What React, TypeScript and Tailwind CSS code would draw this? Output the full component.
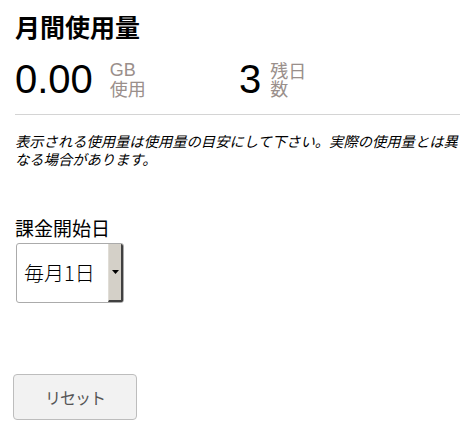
import React from "react";

const jp = "font-['Noto_Sans_CJK_JP',sans-serif]";

export default function App() {
  return (
    <div className={`w-[472px] h-[434px] bg-white px-[15px] pt-[10px] text-black ${jp}`}>
      <h1 className="text-[25px] font-bold leading-[32px]">月間使用量</h1>
      <div className="grid grid-cols-2 mt-[14px] h-[46px]">
        <div className="flex items-center">
          <span className="font-['Liberation_Sans',sans-serif] text-[40px] leading-[40px]">0.00</span>
          <div className="ml-[17px] text-[18px] leading-[18px] text-[#9a8f8b]">
            <div className="font-['Liberation_Sans',sans-serif]">GB</div>
            <div>使用</div>
          </div>
        </div>
        <div className="flex items-center pl-[3px]">
          <span className="font-['Liberation_Sans',sans-serif] text-[40px] leading-[40px]">3</span>
          <div className="ml-[9px] text-[18px] leading-[18px] text-[#9a8f8b]">
            <div>残日</div>
            <div>数</div>
          </div>
        </div>
      </div>
      <div className="mt-[12px] h-px bg-[#d4d4d4] w-[445px]" />
      <p className="mt-[17px] italic text-[14.3px] leading-[18px] whitespace-nowrap">
        表示される使用量は使用量の目安にして下さい。実際の使用量とは異
        <br />
        なる場合があります。
      </p>
      <div className="mt-[48px] text-[19px] leading-[24px]">課金開始日</div>
      <div className="mt-[3px] ml-px flex w-[108px] h-[60px] rounded-[3px] border border-[#ababab] overflow-hidden">
        <div className="flex-1 flex items-center pl-[7px] text-[20px] font-light">毎月1日</div>
        <div className="w-[15px] bg-[#d4d0c8] border-l border-[#e0ddd6] border-r-2 border-r-[#404040] border-b-2 border-b-[#404040] flex items-center justify-center">
          <svg width="7" height="4" viewBox="0 0 7 4"><path d="M0 0h7L3.5 4z" fill="#000" /></svg>
        </div>
      </div>
      <button className="mt-[71px] -ml-[2px] w-[124px] h-[46px] rounded-[4px] border border-[#bdbdbd] bg-[#f2f2f2] text-[16px] text-[#555] tracking-[-1px]">
        リセット
      </button>
    </div>
  );
}
